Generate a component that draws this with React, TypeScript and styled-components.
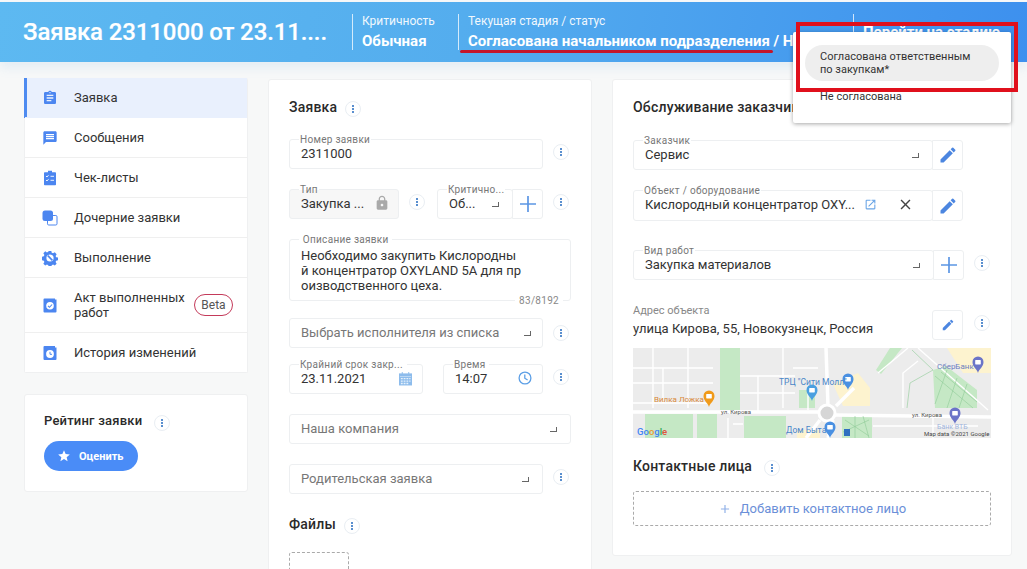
import React, { FC, ReactNode } from 'react';
import styled, { createGlobalStyle } from 'styled-components';
import { MdAssignment, MdAdd, MdClose, MdEdit, MdLock, MdMessage, MdOpenInNew, MdStar } from 'react-icons/md';

const Global = createGlobalStyle`
	html, body {
		margin: 0;
		padding: 0;
		height: 569px;
		overflow: hidden;
		background: #f7f8f8;
		font-family: Roboto, "Liberation Sans", sans-serif;
		color: #2c2c2c;
	}
	* { box-sizing: border-box; }
`;

const Page = styled.div`
	position: relative;
	width: 1027px;
	height: 569px;
	overflow: hidden;
`;

const Header = styled.header`
	display: flex;
	align-items: center;
	height: 60px;
	margin-top: 2px;
	background: linear-gradient(100deg, #5db9f1 0%, #54adee 45%, #3d90ee 100%);
	color: #fff;
	box-shadow: 0 6px 10px rgba(120, 180, 230, 0.14);
`;

const Title = styled.h1`
	width: 352px;
	flex: none;
	margin: 0;
	padding-left: 23px;
	font-size: 24px;
	font-weight: 500;
	letter-spacing: -0.12px;
	white-space: nowrap;
	-webkit-text-stroke: 0.2px #fff;
`;

const HeaderCell = styled.div<{ $w: number }>`
	display: flex;
	flex-direction: column;
	justify-content: center;
	gap: 6px;
	width: ${p => p.$w}px;
	height: 36px;
	flex: none;
	padding-left: 9px;
	border-left: 1px solid rgba(255, 255, 255, 0.75);
	overflow: hidden;
	white-space: nowrap;
`;

const CellLabel = styled.span`
	font-size: 12px;
	line-height: 13px;
	opacity: 0.92;
`;

const CellValue = styled.span`
	font-size: 15px;
	line-height: 15px;
	font-weight: 700;
`;

const StageLink = styled.span`
	padding-left: 9px;
	height: 36px;
	flex: none;
	border-left: 1px solid rgba(255, 255, 255, 0.75);
	font-size: 15px;
	font-weight: 700;
	line-height: 36px;
	white-space: nowrap;
`;

const Columns = styled.main`
	display: flex;
	align-items: flex-start;
	gap: 20px;
	padding: 16px 0 0 24px;
`;

const Side = styled.aside`
	display: flex;
	flex-direction: column;
	gap: 21px;
	width: 224px;
	flex: none;
`;

const Nav = styled.nav`
	background: #fff;
	border: 1px solid #eff0f1;
	border-top: 0;
	border-radius: 2px;
`;

const NavItem = styled.div<{ $active?: boolean; $h?: number }>`
	display: flex;
	align-items: center;
	height: ${p => p.$h ?? 40}px;
	padding-left: 17px;
	font-size: 13px;
	line-height: 15px;
	color: #333;
	border-bottom: 1px solid ${p => (p.$active ? '#e9f0fd' : '#efefef')};
	background: ${p => (p.$active ? '#e9f0fd' : '#fff')};
	box-shadow: ${p => (p.$active ? '-1px 0 0 #4e8bf0, inset 2px 0 0 #4e8bf0' : 'none')};
	&:last-child { border-bottom: 0; height: 39px; }
`;

const NavIcon = styled.span`
	display: flex;
	align-items: center;
	justify-content: center;
	width: 16px;
	height: 16px;
	margin-right: 16px;
	color: #4c86f0;
	flex: none;
`;

const NavLabel = styled.span<{ $wrap?: boolean }>`
	width: ${p => (p.$wrap ? '120px' : 'auto')};
	flex: none;
	white-space: ${p => (p.$wrap ? 'normal' : 'nowrap')};
`;

const Beta = styled.span`
	width: 39px;
	height: 22px;
	border: 1px solid #c43a5a;
	border-radius: 11px;
	font-size: 12px;
	line-height: 20px;
	text-align: center;
	color: #555;
`;

const RatingCard = styled.section`
	height: 98px;
	padding: 18px 19px;
	background: #fff;
	border: 1px solid #eff0f1;
	border-radius: 3px;
`;

const InfoDot = styled.span`
	display: flex;
	flex-direction: column;
	align-items: center;
	justify-content: center;
	gap: 1px;
	width: 16px;
	height: 16px;
	border: 1px solid #e9eef3;
	border-radius: 50%;
	background: #fff;
	i {
		display: block;
		width: 2px;
		height: 2px;
		background: #5a8fcf;
	}
`;

const Info: FC = () => (
	<InfoDot>
		<i />
		<i />
		<i />
	</InfoDot>
);

const Heading = styled.div<{ $gap?: number; $size?: number }>`
	display: flex;
	align-items: center;
	gap: ${p => p.$gap ?? 8}px;
	font-size: ${p => p.$size ?? 14}px;
	line-height: 16px;
	font-weight: 500;
	letter-spacing: 0.2px;
	color: #2a2a2a;
	${InfoDot} {
		margin: 2px 0 -2px;
	}
`;

const RateButton = styled.button`
	display: flex;
	align-items: center;
	gap: 8px;
	width: 94px;
	height: 30px;
	margin-top: 12px;
	padding: 0 0 0 13px;
	border: 0;
	border-radius: 15px;
	background: #4a8cf7;
	color: #fff;
	font: 700 11px Roboto, sans-serif;
`;

const Card = styled.section<{ $w: number; $h?: number }>`
	width: ${p => p.$w}px;
	height: ${p => (p.$h ? `${p.$h}px` : 'auto')};
	flex: none;
	margin-top: 1px;
	padding: 19px 20px 0;
	background: #fff;
	border: 1px solid #eff0f1;
	border-radius: 3px;
`;

const Row = styled.div<{ $top: number }>`
	display: flex;
	align-items: flex-start;
	margin-top: ${p => p.$top}px;
`;

const FieldBox = styled.div<{ $w: number; $h?: number; $left?: number; $locked?: boolean; $muted?: boolean }>`
	position: relative;
	display: flex;
	align-items: center;
	width: ${p => p.$w}px;
	height: ${p => p.$h ?? 30}px;
	margin-left: ${p => p.$left ?? 0}px;
	padding: 0 10px 2px 11px;
	flex: none;
	border: 1px solid #edeff1;
	border-radius: 3px;
	background: ${p => (p.$locked ? '#f7f7f7' : '#fff')};
	font-size: 13px;
	color: ${p => (p.$muted ? '#777' : '#333')};
	white-space: nowrap;
`;

const Legend = styled.span<{ $locked?: boolean }>`
	position: absolute;
	top: -6px;
	left: 9px;
	padding: 0 1px;
	background: ${p => (p.$locked ? 'linear-gradient(#fff 50%, #f7f7f7 50%)' : '#fff')};
	font-size: 10px;
	line-height: 11px;
	letter-spacing: 0.3px;
	color: #777;
	white-space: nowrap;
`;

const Grow = styled.span`
	flex: 1;
	min-width: 0;
	overflow: hidden;
	white-space: nowrap;
`;

const Caret = styled.i<{ $right?: number }>`
	display: block;
	width: 7px;
	height: 5px;
	margin: 3px ${p => p.$right ?? 3}px 0 0;
	flex: none;
	border-right: 1px solid #666;
	border-bottom: 1px solid #666;
`;

const SideButton = styled.div<{ $h?: number; $detached?: boolean; $top?: number }>`
	display: flex;
	align-items: center;
	justify-content: center;
	width: 31px;
	height: ${p => p.$h ?? 30}px;
	flex: none;
	margin-left: -1px;
	margin-top: ${p => p.$top ?? 0}px;
	border: 1px solid #edeff1;
	border-radius: ${p => (p.$detached ? '3px' : '0 3px 3px 0')};
	background: #fff;
	color: #4c86e0;
`;

const InlineIcon = styled.span<{ $left?: number; $right?: number }>`
	display: flex;
	margin-left: ${p => p.$left ?? 0}px;
	margin-right: ${p => p.$right ?? 0}px;
	flex: none;
`;

const InfoSlot = styled.span<{ $left: number; $top?: number }>`
	margin-left: ${p => p.$left}px;
	margin-top: ${p => p.$top ?? 5}px;
	flex: none;
`;

const Lines = styled.div`
	padding-top: 8px;
	font-size: 13px;
	line-height: 15px;
	color: #333;
	align-self: flex-start;
`;

const Counter = styled.span`
	position: absolute;
	right: 7px;
	bottom: -6px;
	padding: 0 4px;
	background: #fff;
	font-size: 10px;
	line-height: 11px;
	letter-spacing: 0.3px;
	color: #888;
`;

const Dashed = styled.div<{ $w: number; $h: number; $top: number }>`
	display: flex;
	align-items: center;
	justify-content: center;
	gap: 8px;
	width: ${p => p.$w}px;
	height: ${p => p.$h}px;
	margin-top: ${p => p.$top}px;
	border: 1px dashed #aaa;
	border-radius: 3px;
	font-size: 13px;
	color: #6b8fd8;
`;

const Address = styled.div`
	width: 300px;
	flex: none;
`;

const AddressLabel = styled.div`
	font-size: 11px;
	line-height: 13px;
	color: #888;
`;

const AddressValue = styled.div`
	margin-top: 4px;
	font-size: 13px;
	line-height: 16px;
	color: #333;
	white-space: nowrap;
`;

const MapBox = styled.svg`
	display: block;
	width: 358px;
	height: 90px;
	margin-top: 8px;
	background: #ececec;
`;

const Dropdown = styled.div`
	position: absolute;
	left: 793px;
	top: 32px;
	width: 218px;
	height: 91px;
	padding-top: 13px;
	background: #fff;
	border-radius: 2px;
	box-shadow: 0 1px 4px rgba(0, 0, 0, 0.35);
	font-size: 11px;
	line-height: 13px;
	color: #333;
`;

const DropdownActive = styled.div`
	width: 194px;
	height: 36px;
	margin-left: 12px;
	padding: 5px 15px;
	border-radius: 18px;
	background: #eeeeee;
`;

const DropdownItem = styled.div`
	margin: 9px 0 0 27px;
`;

const RedFrame = styled.div`
	position: absolute;
	left: 796px;
	top: 22px;
	width: 222px;
	height: 70px;
	border: 4px solid #e0101c;
	pointer-events: none;
`;

const RedLine = styled.div`
	position: absolute;
	left: 460px;
	top: 50px;
	width: 313px;
	height: 3px;
	border-radius: 2px;
	background: #c4152a;
	pointer-events: none;
`;

const icon = (children: ReactNode, size = 16) => (
	<svg width={size} height={size} viewBox="0 0 16 16" fill="currentColor">
		{children}
	</svg>
);

const ChecklistIcon = icon(
	<>
		<path d="M6 0.8h4v1.4h3.2a.8.8 0 0 1 .8.8v11.4a.8.8 0 0 1-.8.8H2.8a.8.8 0 0 1-.8-.8V3a.8.8 0 0 1 .8-.8H6z" />
		<path d="M4 6l1 1 1.5-1.8M4 10l1 1 1.5-1.8M8.5 6.3h3.5M8.5 10.3h3.5" stroke="#fff" strokeWidth="0.9" fill="none" />
	</>
);

const ChildIcon = icon(
	<>
		<rect x="5.5" y="5.5" width="9.5" height="9.5" rx="1.2" fill="none" stroke="currentColor" />
		<rect x="0.5" y="0.5" width="10.5" height="10.5" rx="2.5" />
	</>
);

const GearIcon = icon(
	<>
		<path d="M6.6 0.5h2.8l.4 2 1.4.6 1.8-1.1 2 2-1.1 1.8.6 1.4 2 .4v2.8l-2 .4-.6 1.4 1.1 1.8-2 2-1.8-1.1-1.4.6-.4 2H6.6l-.4-2-1.4-.6-1.8 1.1-2-2 1.1-1.8-.6-1.4-2-.4V6.6l2-.4.6-1.4L1 3l2-2 1.8 1.1 1.4-.6z" transform="translate(0.4 0.4) scale(0.95)" />
		<circle cx="8" cy="8" r="3.6" fill="#fff" />
		<path d="M5.8 5.6l4.6 4.8" stroke="currentColor" strokeWidth="1.6" />
	</>
);

const ActIcon = icon(
	<>
		<path d="M1.5 2.5a1 1 0 0 1 1-1H13v1H14.5v12a1 1 0 0 1-1 1h-11a1 1 0 0 1-1-1z" />
		<circle cx="8" cy="8.8" r="3.8" fill="#fff" />
		<path d="M6 8.8l1.5 1.5 2.6-2.8" stroke="currentColor" strokeWidth="1.1" fill="none" />
	</>
);

const HistoryIcon = icon(
	<>
		<path d="M1.5 2a1 1 0 0 1 1-1H13v1.5H14.5V14a1 1 0 0 1-1 1h-11a1 1 0 0 1-1-1z" />
		<circle cx="8" cy="9" r="3.9" fill="#fff" />
		<path d="M8 6.8V9.3H10" stroke="currentColor" strokeWidth="1" fill="none" />
	</>
);

const CalendarIcon: FC = () => (
	<svg width="13" height="15" viewBox="0 0 14 15" fill="#8dbcec">
		<path d="M0 2h14v13H0z" />
		<path d="M3 0.5h1V3H3zM10 0.5h1V3h-1z" />
		<path
			d="M1 5h12v.7H1zM2 7h2v1.4H2zM5 7h2v1.4H5zM8 7h2v1.4H8zM11 7h1.4v1.4H11zM2 9.6h2V11H2zM5 9.6h2V11H5zM8 9.6h2V11H8zM11 9.6h1.4V11H11zM2 12.2h2v1.4H2zM5 12.2h2v1.4H5zM8 12.2h2v1.4H8z"
			fill="#e8f2fb"
		/>
	</svg>
);

const ClockIcon: FC = () => (
	<svg width="14" height="14" viewBox="0 0 14 14" fill="none" stroke="#5c9fe6" strokeWidth="1.3">
		<circle cx="7" cy="7" r="5.9" />
		<path d="M6.8 3.4V7.2L9.6 9" />
	</svg>
);

const PlusIcon: FC = () => (
	<svg width="16" height="16" viewBox="0 0 16 16" stroke="#5c96e4" strokeWidth="1.7">
		<path d="M8 0v16M0 8h16" />
	</svg>
);

const Pin: FC<{ x: number; y: number; color: string }> = ({ x, y, color }) => (
	<g transform={`translate(${x} ${y})`}>
		<path d="M0 0C-1 -4 -5.5 -6 -5.5 -11A5.5 5.5 0 1 1 5.5 -11C5.5 -6 1 -4 0 0Z" fill={color} />
		<rect x="-2.8" y="-13" width="5.6" height="4.4" rx="0.6" fill="#fff" />
	</g>
);

const MapDrawing: FC = () => (
	<MapBox viewBox="0 0 358 90">
		<g fill="#c5e8c5">
			<rect x="87" y="0" width="20" height="62" />
			<rect x="12" y="66" width="48" height="24" />
			<rect x="64" y="66" width="20" height="24" />
			<rect x="111" y="68" width="42" height="22" />
			<path d="M300 22L313 18 344 42V60H302z" />
			<path d="M209 68h30v22h-30z" />
			<path d="M243 22L257 0h12L248 26z" />
			<path d="M166 42h16v18h-16z" />
		</g>
		<g fill="#fdf3cf">
			<path d="M200 36L225 25 237 40V58H210z" />
			<path d="M314 0H358V25H330z" />
			<path d="M164 82h23v8h-23z" />
		</g>
		<g fill="none" stroke="#fff" strokeWidth="1.4">
			<path d="M0 20h80M0 35h80M0 55h78M20 0v60M55 0v60M30 20v35" />
			<path d="M107 28h55M107 45h55M125 28v35M150 0v60M160 20h25M175 40v22" />
			<path d="M245 25l30-25M285 0l70 62M270 60V25l15-12" />
			<path d="M240 78h105M300 68v22M95 70v20M100 76h10" />
		</g>
		<g fill="none" stroke="#fff" strokeWidth="3.5">
			<path d="M0 64h186M202 67l156 2" />
			<path d="M193 0l2 58M200 72l-5 18" />
			<path d="M203 58l18-18M187 72l-14 18" />
		</g>
		<circle cx="194" cy="65" r="8" fill="#d6d6d6" stroke="#fff" strokeWidth="3" />
		<g fill="none" stroke="#8ecb97" strokeWidth="0.6">
			<path d="M279 2L300 22L277 35L274 60" />
			<path d="M302 28l38 32M308 24l36 30M314 22l-12 34M324 30l-10 30M334 36l-8 24" />
			<path d="M212 72l24 16M210 84l26-12M222 68v22M230 68l6 22" />
		</g>
		<Pin x={76} y={59} color="#f09a1a" />
		<Pin x={215} y={42} color="#4a90e2" />
		<Pin x={179} y={53} color="#4a9fe0" />
		<Pin x={197} y={90} color="#4a90e2" />
		<Pin x={345} y={25} color="#6b74c8" />
		<Pin x={322} y={76} color="#6b74c8" />
		<rect x="211" y="81" width="6" height="7" fill="#2f6fc0" />
		<g fontFamily="Roboto, sans-serif" fontSize="8.5">
			<text x="146" y="37" fill="#4a86c8">ТРЦ "Сити Молл"</text>
			<text x="21" y="54" fontSize="8" fill="#d98a3a">Вилка Ложка</text>
			<text x="153" y="85" fill="#4a86c8">Дом Быта</text>
			<text x="304" y="21" fontSize="8" fill="#6d7fc0">СберБанк</text>
			<text x="304" y="81" fontSize="7" fill="#9fb4dc">Банк ВТБ</text>
			<text x="88" y="66" fontSize="6" fill="#555">ул. Кирова</text>
			<text x="279" y="69" fontSize="6" fill="#555">ул. Кирова</text>
			<text x="291" y="88" fontSize="6" fill="#444">Map data ©2021 Google</text>
			<text x="4" y="87" fontSize="9.5" fontWeight="500">
				<tspan fill="#4285f4">Go</tspan>
				<tspan fill="#ea9a35">o</tspan>
				<tspan fill="#4285f4">g</tspan>
				<tspan fill="#34a853">l</tspan>
				<tspan fill="#e0533f">e</tspan>
			</text>
		</g>
	</MapBox>
);

const App: FC = () => (
	<Page>
		<Global />
		<Header>
			<Title>Заявка 2311000 от 23.11....</Title>
			<HeaderCell $w={106}>
				<CellLabel>Критичность</CellLabel>
				<CellValue>Обычная</CellValue>
			</HeaderCell>
			<HeaderCell $w={395}>
				<CellLabel>Текущая стадия / статус</CellLabel>
				<CellValue>Согласована начальником подразделения / На согласовании</CellValue>
			</HeaderCell>
			<StageLink>Перейти на стадию</StageLink>
		</Header>
		<Columns>
			<Side>
				<Nav>
					<NavItem $active>
						<NavIcon><MdAssignment size={18} /></NavIcon>
						<NavLabel>Заявка</NavLabel>
					</NavItem>
					<NavItem>
						<NavIcon><MdMessage size={18} /></NavIcon>
						<NavLabel>Сообщения</NavLabel>
					</NavItem>
					<NavItem>
						<NavIcon>{ChecklistIcon}</NavIcon>
						<NavLabel>Чек-листы</NavLabel>
					</NavItem>
					<NavItem>
						<NavIcon>{ChildIcon}</NavIcon>
						<NavLabel>Дочерние заявки</NavLabel>
					</NavItem>
					<NavItem>
						<NavIcon>{GearIcon}</NavIcon>
						<NavLabel>Выполнение</NavLabel>
					</NavItem>
					<NavItem $h={55}>
						<NavIcon>{ActIcon}</NavIcon>
						<NavLabel $wrap>Акт выполненных работ</NavLabel>
						<Beta>Beta</Beta>
					</NavItem>
					<NavItem>
						<NavIcon>{HistoryIcon}</NavIcon>
						<NavLabel>История изменений</NavLabel>
					</NavItem>
				</Nav>
				<RatingCard>
					<Heading $gap={12} $size={13}>Рейтинг заявки <Info /></Heading>
					<RateButton><MdStar size={14} />Оценить</RateButton>
				</RatingCard>
			</Side>

			<Card $w={324}>
				<Heading>Заявка <Info /></Heading>
				<Row $top={24}>
					<FieldBox $w={254}>
						<Legend>Номер заявки</Legend>
						<Grow>2311000</Grow>
					</FieldBox>
					<InfoSlot $left={10}><Info /></InfoSlot>
				</Row>
				<Row $top={20}>
					<FieldBox $w={110} $locked>
						<Legend $locked>Тип</Legend>
						<Grow>Закупка ...</Grow>
						<InlineIcon $right={-2}><MdLock size={16} color="#a9a9a9" /></InlineIcon>
					</FieldBox>
					<InfoSlot $left={10}><Info /></InfoSlot>
					<FieldBox $w={76} $left={12}>
						<Legend>Критично...</Legend>
						<Grow>Об...</Grow>
						<Caret />
					</FieldBox>
					<SideButton><PlusIcon /></SideButton>
					<InfoSlot $left={10}><Info /></InfoSlot>
				</Row>
				<Row $top={20}>
					<FieldBox $w={282} $h={62}>
						<Legend>&nbsp;Описание заявки&nbsp;</Legend>
						<Lines>
							Необходимо закупить Кислородны<br />
							й концентратор OXYLAND 5А для пр<br />
							оизводственного цеха.
						</Lines>
						<Counter>83/8192</Counter>
					</FieldBox>
				</Row>
				<Row $top={17}>
					<FieldBox $w={254} $muted>
						<Grow>Выбрать исполнителя из списка</Grow>
						<Caret $right={1} />
					</FieldBox>
					<InfoSlot $left={10} $top={7}><Info /></InfoSlot>
				</Row>
				<Row $top={16}>
					<FieldBox $w={134}>
						<Legend>Крайний срок закр...&nbsp;</Legend>
						<Grow>23.11.2021</Grow>
						<CalendarIcon />
					</FieldBox>
					<FieldBox $w={100} $left={20}>
						<Legend>Время&nbsp;</Legend>
						<Grow>14:07</Grow>
						<ClockIcon />
					</FieldBox>
					<InfoSlot $left={10}><Info /></InfoSlot>
				</Row>
				<Row $top={20}>
					<FieldBox $w={282} $muted>
						<Grow>Наша компания</Grow>
						<Caret />
					</FieldBox>
				</Row>
				<Row $top={20}>
					<FieldBox $w={254} $muted>
						<Grow>Родительская заявка</Grow>
						<Caret />
					</FieldBox>
					<InfoSlot $left={10}><Info /></InfoSlot>
				</Row>
				<Row $top={22}>
					<Heading>Файлы <Info /></Heading>
				</Row>
				<Dashed $w={60} $h={60} $top={20} />
			</Card>

			<Card $w={400} $h={477}>
				<Heading>Обслуживание заказчика</Heading>
				<Row $top={25}>
					<FieldBox $w={300}>
						<Legend>Заказчик</Legend>
						<Grow>Сервис</Grow>
						<Caret />
					</FieldBox>
					<SideButton><MdEdit size={20} color="#4c86e0" /></SideButton>
				</Row>
				<Row $top={20}>
					<FieldBox $w={300} $h={31}>
						<Legend>Объект / оборудование</Legend>
						<Grow>Кислородный концентратор OXY...</Grow>
						<InlineIcon $left={6} $right={20}><MdOpenInNew size={13} color="#6aa5e6" /></InlineIcon>
						<InlineIcon $right={8}><MdClose size={17} color="#444" /></InlineIcon>
					</FieldBox>
					<SideButton $h={31}><MdEdit size={20} color="#4c86e0" /></SideButton>
				</Row>
				<Row $top={29}>
					<FieldBox $w={301}>
						<Legend>Вид работ</Legend>
						<Grow>Закупка материалов</Grow>
						<Caret />
					</FieldBox>
					<SideButton><PlusIcon /></SideButton>
					<InfoSlot $left={10}><Info /></InfoSlot>
				</Row>
				<Row $top={24}>
					<Address>
						<AddressLabel>Адрес объекта</AddressLabel>
						<AddressValue>улица Кирова, 55, Новокузнецк, Россия</AddressValue>
					</Address>
					<SideButton $detached $top={6}><MdEdit size={14} color="#4c86e0" /></SideButton>
					<InfoSlot $left={11} $top={11}><Info /></InfoSlot>
				</Row>
				<MapDrawing />
				<Row $top={20}>
					<Heading $gap={12}>Контактные лица <Info /></Heading>
				</Row>
				<Dashed $w={358} $h={35} $top={17}>
					<MdAdd size={14} color="#8fb0e8" />
					Добавить контактное лицо
				</Dashed>
			</Card>
		</Columns>
		<RedLine />
		<Dropdown>
			<DropdownActive>Согласована ответственным<br />по закупкам*</DropdownActive>
			<DropdownItem>Не согласована</DropdownItem>
		</Dropdown>
		<RedFrame />
	</Page>
);

export default App;
